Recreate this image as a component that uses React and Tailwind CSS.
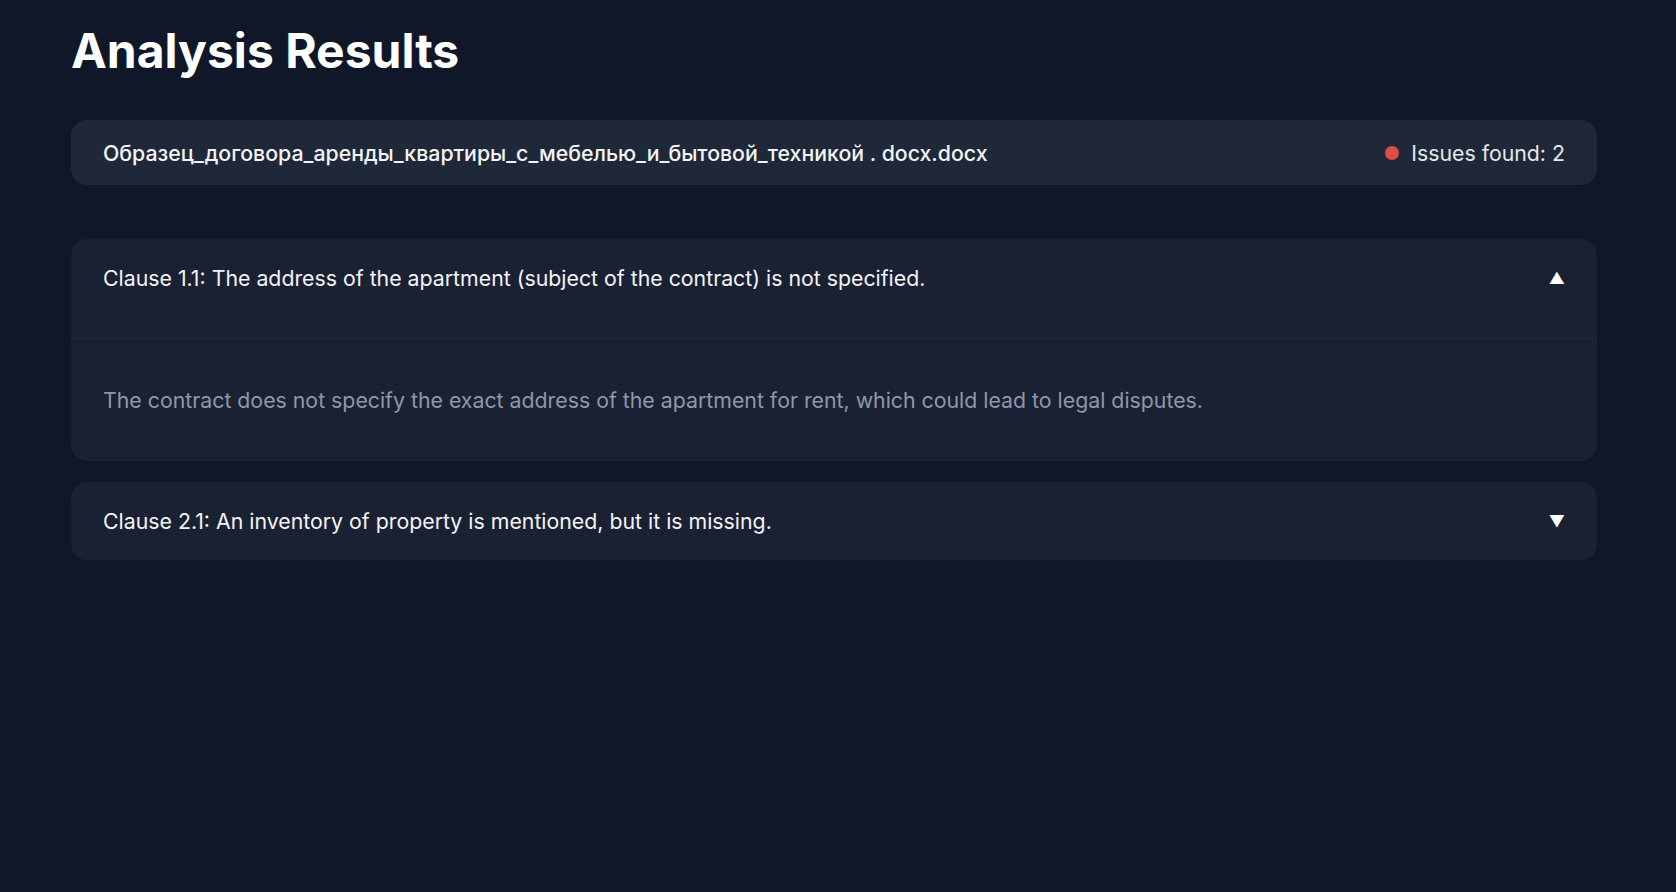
const clauses = [
  {
    id: 1,
    title:
      "Clause 1.1: The address of the apartment (subject of the contract) is not specified.",
    body: "The contract does not specify the exact address of the apartment for rent, which could lead to legal disputes.",
    open: true,
  },
  {
    id: 2,
    title: "Clause 2.1: An inventory of property is mentioned, but it is missing.",
    body: "",
    open: false,
  },
];

const App = () => {
  return (
    <div
      className="min-h-screen bg-[#0f1729] text-white pl-[71px] pr-[79px] pt-[27px]"
      style={{ fontFamily: "Inter, 'Noto Sans', sans-serif" }}
    >
      <h1 className="text-5xl font-bold text-white leading-none">
        Analysis Results
      </h1>

      <div className="mt-[45px] h-[65px] flex items-center justify-between px-8 rounded-2xl bg-[#1f2838]">
        <span className="text-[21.3px] leading-7 font-medium text-[#f3f4f6]">
          Образец_договора_аренды_квартиры_с_мебелью_и_бытовой_техникой . docx.docx
        </span>
        <div className="flex items-center gap-3">
          <span className="w-3.5 h-3.5 rounded-full bg-[#de4d48]" />
          <span className="text-[21.3px] leading-7 text-[#e5e7eb]">Issues found: 2</span>
        </div>
      </div>

      <div className="mt-[54px] flex flex-col gap-[21px]">
        {clauses.map((clause) => (
          <div key={clause.id} className="rounded-2xl bg-[#1a2133]">
            <div
              className={
                clause.open
                  ? "flex items-center justify-between px-8 pt-[25px] pb-[46px]"
                  : "flex items-center justify-between px-8 py-[25px]"
              }
            >
              <span className="text-[21.3px] leading-7 text-[#f3f4f6]">
                {clause.title}
              </span>
              <span className="text-base text-white">
                {clause.open ? "▲" : "▼"}
              </span>
            </div>
            {clause.open && (
              <div className="border-t border-[#222a3b] px-8 py-[47px]">
                <p className="text-[21.3px] leading-7 text-[#8e98aa]">{clause.body}</p>
              </div>
            )}
          </div>
        ))}
      </div>
    </div>
  );
};

export default App;
